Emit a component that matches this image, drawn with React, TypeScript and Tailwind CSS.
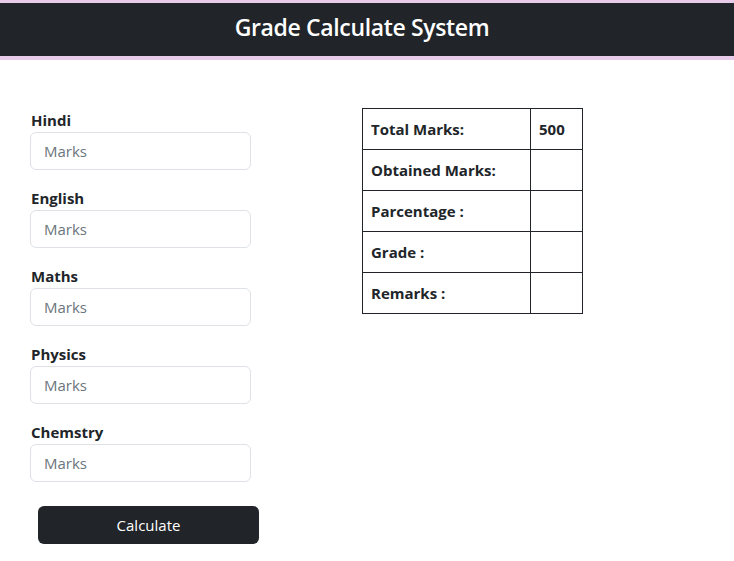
export default function App() {
  const subjects = ["Hindi", "English", "Maths", "Physics", "Chemstry"];
  const rows: [string, string][] = [
    ["Total Marks:", "500"],
    ["Obtained Marks:", ""],
    ["Parcentage :", ""],
    ["Grade :", ""],
    ["Remarks :", ""],
  ];
  return (
    <div className="min-h-[561px] bg-white text-[#212529]" style={{ fontFamily: '"Open Sans", "Noto Sans", sans-serif' }}>
      <header className="border-t-[3px] border-b-[4px] border-[#e8cbe8] bg-[#212529] h-[60px] flex items-center justify-center">
        <h1 className="text-white text-[23px] font-semibold tracking-[-0.35px] mb-[5px] mr-[10px]">Grade Calculate System</h1>
      </header>
      <div className="flex pt-[48px]">
        <div className="ml-[30px] w-[221px] flex flex-col">
          {subjects.map((s) => (
            <div key={s} className="mb-[16px]">
              <label className="block h-[24px] leading-[24px] text-[15px] font-bold pl-[1px]">{s}</label>
              <input
                placeholder="Marks"
                className="w-full h-[38px] rounded-[6px] border border-[#dee2e6] px-[13px] text-[15px] placeholder:text-[#6c757d] outline-none"
              />
            </div>
          ))}
          <button className="ml-[8px] mt-[8px] w-[221px] h-[38px] rounded-[6px] bg-[#212529] text-white text-[15px]">
            Calculate
          </button>
        </div>
        <div className="ml-[111px]">
          <table className="border-collapse border border-[#212529] w-[221px]">
            <tbody>
              {rows.map(([k, v]) => (
                <tr key={k} className="h-[41px]">
                  <td className="border border-[#212529] px-[8px] text-[15px] font-bold w-[168px]">{k}</td>
                  <td className="border border-[#212529] px-[8px] text-[15px] font-bold">{v}</td>
                </tr>
              ))}
            </tbody>
          </table>
        </div>
      </div>
    </div>
  );
}
